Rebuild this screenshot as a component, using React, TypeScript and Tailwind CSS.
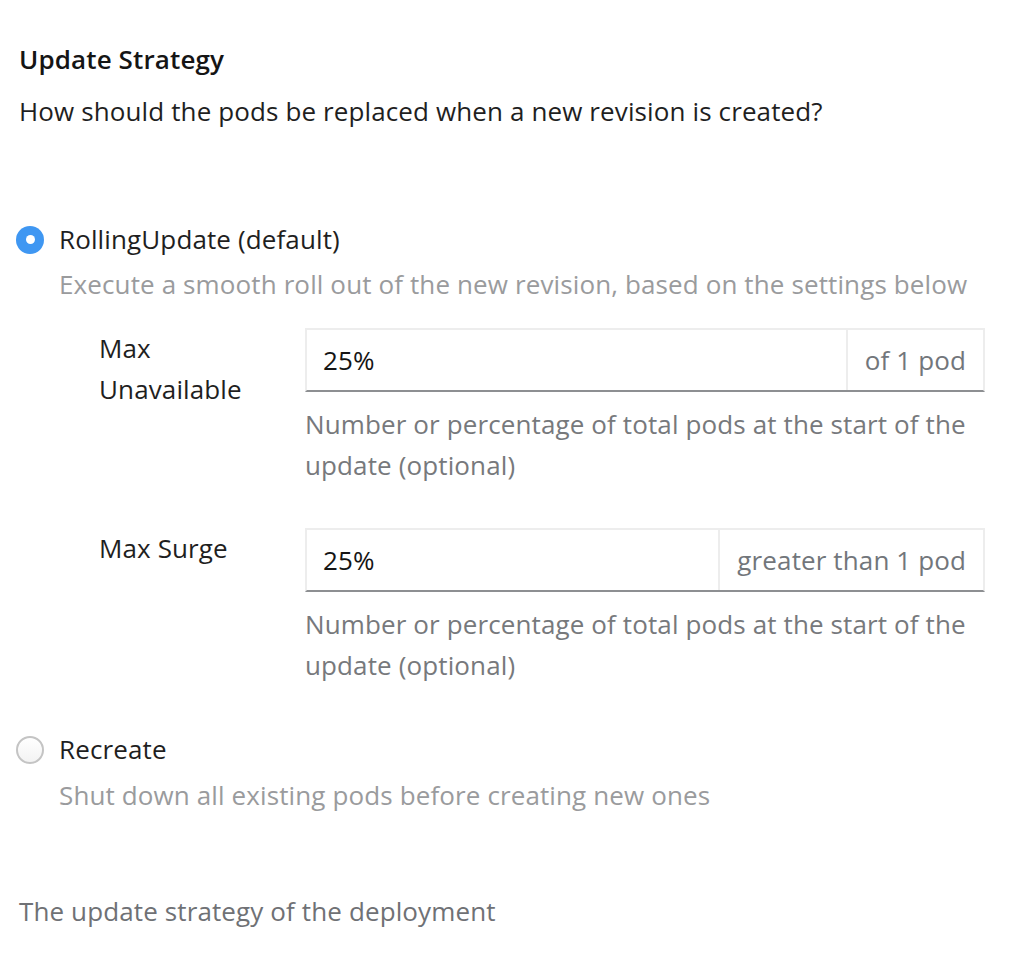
import React from "react";

const font = { fontFamily: "'Open Sans', 'Noto Sans', sans-serif" };

function Radio({ checked }: { checked?: boolean }) {
  if (checked) {
    return (
      <span className="flex h-[28px] w-[28px] shrink-0 items-center justify-center rounded-full bg-[#3f97f2]">
        <span className="h-[9px] w-[9px] rounded-full bg-white" />
      </span>
    );
  }
  return (
    <span className="h-[28px] w-[28px] shrink-0 rounded-full border-2 border-[#c4c4c4] bg-gradient-to-b from-white to-[#f3f3f3]" />
  );
}

function Field({
  label,
  value,
  addon,
}: {
  label: React.ReactNode;
  value: string;
  addon: string;
}) {
  return (
    <div className="flex">
      <div className="w-[206px] shrink-0 pr-[30px] leading-[41px] text-[#1f1f1f]">{label}</div>
      <div className="w-[680px]">
        <div className="flex h-[64px] border-2 border-[#ededed] border-b-[#8d8f92]">
          <div className="flex flex-1 items-center pl-[16px] text-[#151515]">{value}</div>
          <div className="flex items-center border-l-2 border-[#ededed] px-[17px] text-[#72767b]">{addon}</div>
        </div>
        <p className="mt-[12px] leading-[41px] text-[#77797c]">
          Number or percentage of total pods at the start of the update (optional)
        </p>
      </div>
    </div>
  );
}

export default function App() {
  return (
    <div
      className="min-h-[968px] w-[1012px] bg-white px-[19px] pt-[39px] text-[26px] tracking-[0.12px]"
      style={font}
    >
      <h3 className="font-semibold leading-[41px] text-[#151515]">Update Strategy</h3>
      <p className="mt-[11px] leading-[41px] text-[#1f1f1f]">
        How should the pods be replaced when a new revision is created?
      </p>

      <div className="mt-[87px]">
        <label className="-ml-[3px] flex items-center gap-[15px] leading-[41px] text-[#1f1f1f]">
          <Radio checked />
          RollingUpdate (default)
        </label>
        <p className="ml-[40px] mt-[4px] leading-[41px] text-[#9a9b9d]">
          Execute a smooth roll out of the new revision, based on the settings below
        </p>

        <div className="ml-[80px] mt-[23px] flex flex-col gap-[42px]">
          <Field
            label={
              <>
                Max
                <br />
                Unavailable
              </>
            }
            value="25%"
            addon="of 1 pod"
          />
          <Field label="Max Surge" value="25%" addon="greater than 1 pod" />
        </div>
      </div>

      <div className="mt-[43px]">
        <label className="-ml-[3px] flex items-center gap-[15px] leading-[41px] text-[#1f1f1f]">
          <Radio />
          Recreate
        </label>
        <p className="ml-[40px] mt-[5px] leading-[41px] text-[#9a9b9d]">
          Shut down all existing pods before creating new ones
        </p>
      </div>

      <p className="mt-[75px] leading-[41px] text-[#6f7175]">The update strategy of the deployment</p>
    </div>
  );
}
